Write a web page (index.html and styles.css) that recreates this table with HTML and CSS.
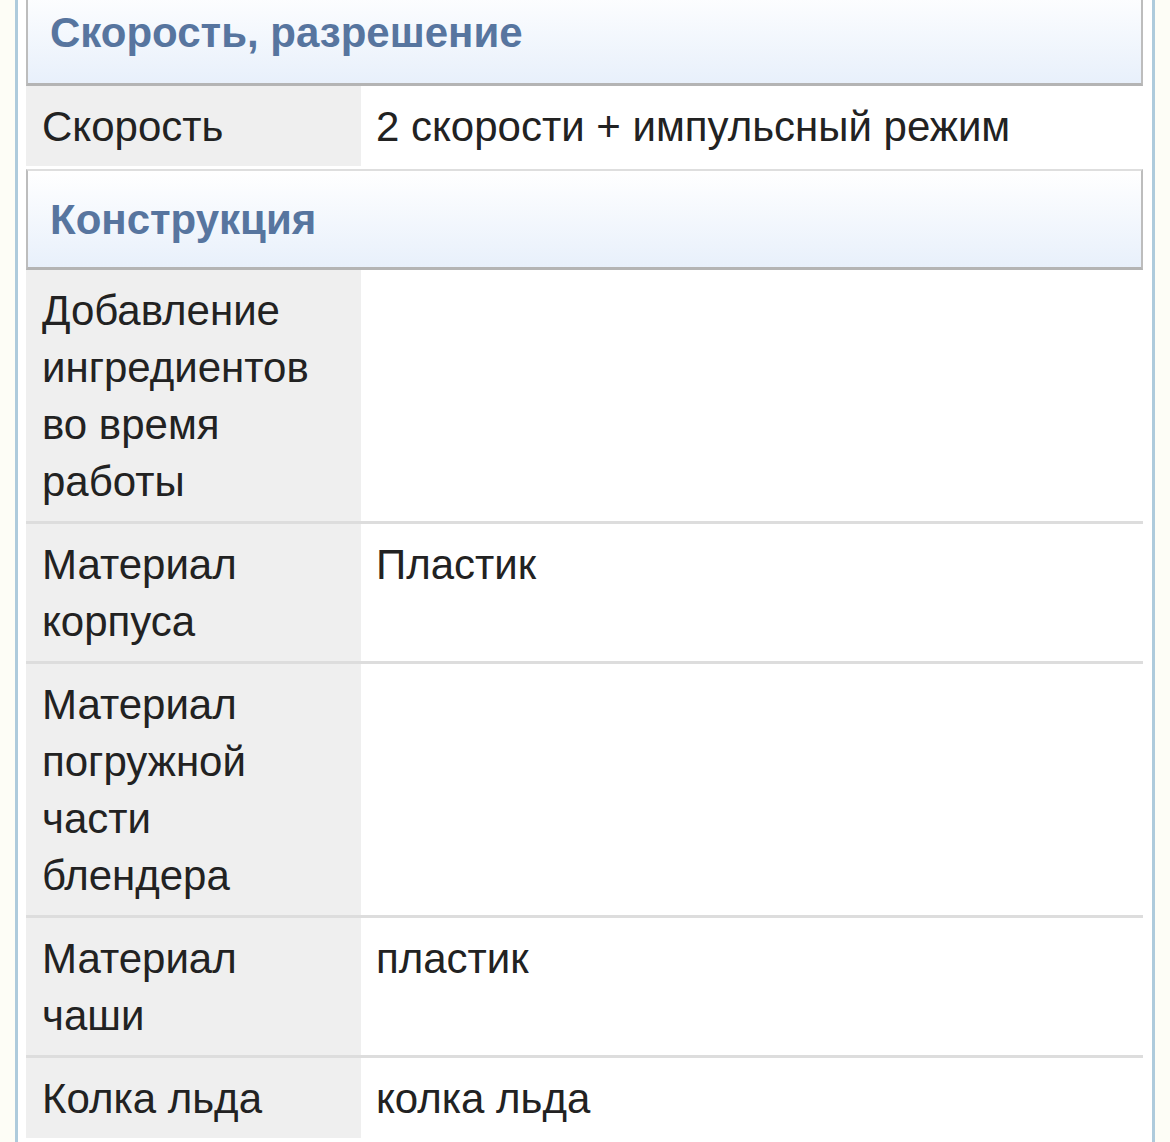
FILE: index.html
```html
<!DOCTYPE html>
<html lang="ru">
<head>
<meta charset="utf-8">
<link rel="stylesheet" href="styles.css">
</head>
<body>
<div class="page">
  <div class="specs">
    <div class="group first-group">Скорость, разрешение</div>
    <div class="row first">
      <div class="label">Скорость</div>
      <div class="value">2 скорости + импульсный режим</div>
    </div>
    <div class="group second">Конструкция</div>
    <div class="row first">
      <div class="label">Добавление ингредиентов во время работы</div>
      <div class="value"></div>
    </div>
    <div class="row">
      <div class="label">Материал корпуса</div>
      <div class="value">Пластик</div>
    </div>
    <div class="row">
      <div class="label">Материал погружной части блендера</div>
      <div class="value"></div>
    </div>
    <div class="row">
      <div class="label">Материал чаши</div>
      <div class="value">пластик</div>
    </div>
    <div class="row">
      <div class="label">Колка льда</div>
      <div class="value">колка льда</div>
    </div>
  </div>
</div>
</body>
</html>
```
FILE: styles.css
```css
html, body {
  margin: 0;
  padding: 0;
}
body {
  background: #fdfdf6;
  font-family: "Liberation Sans", Arial, sans-serif;
  color: #222;
  overflow: hidden;
  height: 1142px;
}
.page {
  margin-left: 15px;
  width: 1117px;
  border-left: 3px solid #aecbdc;
  border-right: 3px solid #aecbdc;
  background: #fff;
  padding: 0 9px 0 8px;
  min-height: 1200px;
}
.specs {
  margin-top: -15px;
}
.group {
  border: 2px solid #bdbdbd;
  border-top-color: #dedede;
  border-bottom: 3px solid #b4b4b4;
  background: linear-gradient(#ffffff, #e8f0fb);
  color: #57759f;
  font-weight: bold;
  font-size: 42px;
  line-height: 57px;
  padding: 20px 22px 19px;
}
.group.first-group {
  padding-top: 17px;
  padding-bottom: 22px;
}
.group.second {
  margin-top: 3px;
}
.row {
  display: grid;
  grid-template-columns: 335px 1fr;
  column-gap: 2px;
  border-top: 3px solid #dddddd;
  font-size: 42px;
  line-height: 57px;
}
.row.first {
  border-top: 0;
}
.label {
  background: #efefef;
  padding: 12px 30px 11px 16px;
}
.value {
  background: #fff;
  padding: 12px 12px 11px 13px;
}
```
